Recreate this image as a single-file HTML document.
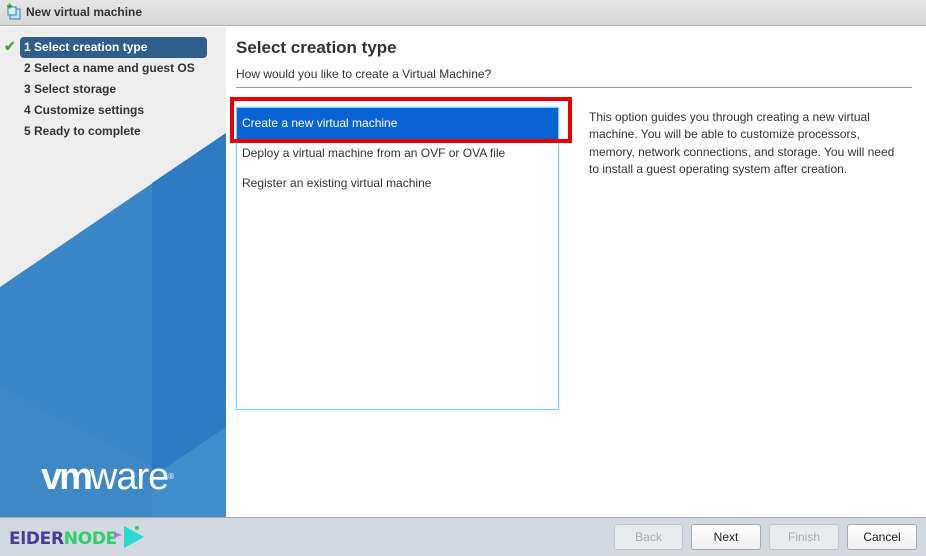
<!DOCTYPE html>
<html><head><style>
*{margin:0;padding:0;box-sizing:border-box}
body{width:926px;height:556px;overflow:hidden;font-family:"Liberation Sans",Arial,sans-serif;background:#fff;position:relative}
.abs{position:absolute}
.title{left:0;top:0;width:926px;height:26px;background:linear-gradient(#e6e6e6,#d6d6d6);border-bottom:1px solid #b8b8b8}
.title span{position:absolute;left:26px;top:5px;font-size:12px;font-weight:bold;color:#333}
.step{position:absolute;left:24px;font-size:12px;font-weight:bold;color:#333}
.btn{position:absolute;top:524px;height:26px;border:1px solid #a9a9a9;border-radius:3px;background:linear-gradient(#fff,#f0f0f0);font-size:12px;text-align:center;line-height:24px;color:#222}
.dis{color:#aaa;border-color:#c4c4c4;background:#e8ebee}
</style></head><body>
<div class="abs title"><svg class="abs" style="left:6px;top:3px" width="16" height="18"><rect x="4" y="6" width="10" height="10" fill="#bfe0f0" stroke="#2f88b8"/><rect x="2" y="4" width="8" height="8" fill="#d8eef8" stroke="#2f88b8"/><path d="M1 3h5M3.5 0.5v5" stroke="#2aa52a" stroke-width="1.6"/></svg><span>New virtual machine</span></div>
<svg class="abs" style="left:0;top:27px" width="226" height="490">
<rect width="226" height="490" fill="#eeeeee"/>
<polygon points="0,260 226,106 226,490 0,490" fill="#3a86c6"/>
<polygon points="152,156 226,106 226,400 152,450" fill="#2e7bc4"/>
<polygon points="0,360 152,440 152,490 0,490" fill="#3f88c6"/>
<polygon points="152,450 226,400 226,490 152,490" fill="#428dcc"/>
</svg>
<div class="abs" style="left:20px;top:37px;width:187px;height:21px;background:#2f5d8c;border-radius:4px"></div>
<div class="abs" style="left:4px;top:38px;color:#4aa336;font-size:14px;font-weight:bold">✔</div>
<div class="step" style="top:40px;color:#fff">1 Select creation type</div>
<div class="step" style="top:61px">2 Select a name and guest OS</div>
<div class="step" style="top:82px">3 Select storage</div>
<div class="step" style="top:103px">4 Customize settings</div>
<div class="step" style="top:124px">5 Ready to complete</div>
<div class="abs" style="left:41px;top:455px;color:#fff;font-size:38px;letter-spacing:-1px;line-height:44px"><b style="letter-spacing:-3px">vm</b>ware<span style="font-size:8px;vertical-align:top">®</span></div>
<div class="abs" style="left:236px;top:38px;font-size:17px;font-weight:bold;color:#333">Select creation type</div>
<div class="abs" style="left:236px;top:67px;font-size:12px;color:#333">How would you like to create a Virtual Machine?</div>
<div class="abs" style="left:236px;top:87px;width:676px;height:1px;background:#999"></div>
<div class="abs" style="left:236px;top:107px;width:323px;height:303px;border:1px solid #7fd3ea;box-shadow:0 0 2px #a0e0f0"></div>
<div class="abs" style="left:237px;top:108px;width:321px;height:31px;background:#0a63d4"></div>
<div class="abs" style="left:242px;top:116px;font-size:12px;color:#fff">Create a new virtual machine</div>
<div class="abs" style="left:242px;top:146px;font-size:12px;color:#333">Deploy a virtual machine from an OVF or OVA file</div>
<div class="abs" style="left:242px;top:176px;font-size:12px;color:#333">Register an existing virtual machine</div>
<div class="abs" style="left:230px;top:97px;width:342px;height:46px;border:4px solid #ee0000"></div>
<div class="abs" style="left:589px;top:109px;width:314px;font-size:12px;line-height:17.3px;color:#333">This option guides you through creating a new virtual machine. You will be able to customize processors, memory, network connections, and storage. You will need to install a guest operating system after creation.</div>
<div class="abs" style="left:0;top:517px;width:926px;height:39px;background:#d3d9e1;border-top:1px solid #aaa"></div>
<div class="abs" style="left:9px;top:529px;font-family:'DejaVu Sans',sans-serif;font-weight:bold;font-size:17px;letter-spacing:-.3px;line-height:20px"><span style="color:#4a3a9a">ElDER</span><span style="color:#2fcf6a">NODE</span></div>
<svg class="abs" style="left:110px;top:524px" width="36" height="26"><polygon points="14,2 34,13 14,24" fill="#27d9d0"/><polygon points="4,8 12,11 4,14" fill="#b86cf0"/><circle cx="27" cy="4" r="2" fill="#2fcf6a"/></svg>
<div class="btn dis" style="left:614px;width:69px">Back</div>
<div class="btn" style="left:691px;width:70px">Next</div>
<div class="btn dis" style="left:769px;width:70px">Finish</div>
<div class="btn" style="left:847px;width:70px">Cancel</div>
</body></html>
